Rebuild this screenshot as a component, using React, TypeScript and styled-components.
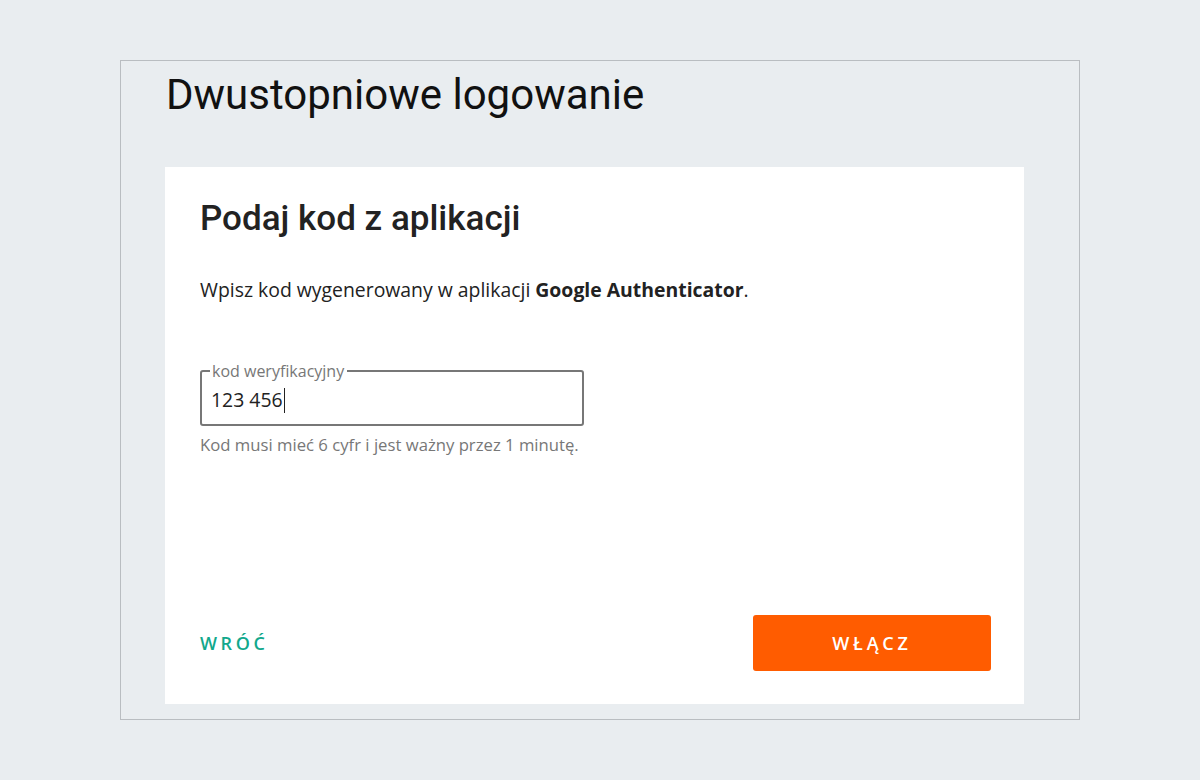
import styled, { createGlobalStyle } from "styled-components";

const GlobalStyle = createGlobalStyle`
  html, body {
    margin: 0;
    padding: 0;
    background: #e9edf0;
  }
  #root {
    padding-top: 60px;
  }
`;

const Frame = styled.div`
  box-sizing: border-box;
  width: 960px;
  height: 660px;
  margin: 0 auto;
  border: 1px solid #b9bdc1;
  background: #e9edf0;
  display: flex;
  flex-direction: column;
  padding: 0 55px 15px 44px;
`;

const PageTitle = styled.h1`
  margin: 0;
  padding: 8px 0 0 1px;
  height: 106px;
  box-sizing: border-box;
  font-family: Roboto, "Liberation Sans", sans-serif;
  font-weight: 400;
  font-size: 42px;
  line-height: 52px;
  color: #111;
`;

const Card = styled.div`
  flex: 1;
  background: #fff;
  display: flex;
  flex-direction: column;
  padding: 31px 33px 33px 35px;
`;

const CardTitle = styled.h2`
  margin: 0;
  font-family: Roboto, "Liberation Sans", sans-serif;
  font-weight: 500;
  font-size: 35px;
  line-height: 42px;
  color: #222;
`;

const Lead = styled.p`
  margin: 36px 0 0;
  font-family: "Open Sans", "Liberation Sans", sans-serif;
  font-size: 19.4px;
  line-height: 28px;
  color: #222;

  b {
    font-weight: 700;
  }
`;

const Field = styled.fieldset`
  box-sizing: border-box;
  width: 384px;
  height: 63px;
  margin: 59px 0 0;
  padding: 0 9px;
  border: 2px solid #777;
  border-radius: 3px;
`;

const Legend = styled.legend`
  padding: 0 3px 0 2px;
  margin-left: -1px;
  font-family: "Open Sans", "Liberation Sans", sans-serif;
  font-size: 16px;
  line-height: 16px;
  color: #777;
`;

const Value = styled.div`
  font-family: "Open Sans", "Liberation Sans", sans-serif;
  font-size: 19.4px;
  line-height: 42px;
  color: #222;
  display: flex;
  align-items: center;
`;

const Caret = styled.span`
  display: inline-block;
  width: 1.5px;
  height: 25px;
  background: #222;
  margin-left: 1px;
`;

const Hint = styled.p`
  margin: 8px 0 0;
  font-family: "Open Sans", "Liberation Sans", sans-serif;
  font-size: 16.7px;
  line-height: 22px;
  color: #777;
`;

const Footer = styled.div`
  margin-top: auto;
  display: flex;
  align-items: center;
  justify-content: space-between;
`;

const TextButton = styled.button`
  background: none;
  border: none;
  padding: 0;
  font-family: "Open Sans", "Liberation Sans", sans-serif;
  font-weight: 600;
  font-size: 18px;
  letter-spacing: 3.6px;
  color: #12a88c;
  cursor: pointer;
`;

const PrimaryButton = styled.button`
  width: 238px;
  height: 56px;
  border: none;
  border-radius: 3px;
  background: #ff5c00;
  color: #fff;
  font-family: "Open Sans", "Liberation Sans", sans-serif;
  font-weight: 600;
  font-size: 18px;
  letter-spacing: 3.8px;
  cursor: pointer;
`;

export default function App() {
  return (
    <>
      <GlobalStyle />
      <Frame>
        <PageTitle>Dwustopniowe logowanie</PageTitle>
        <Card>
          <CardTitle>Podaj kod z aplikacji</CardTitle>
          <Lead>
            Wpisz kod wygenerowany w aplikacji <b>Google Authenticator</b>.
          </Lead>
          <Field>
            <Legend>kod weryfikacyjny</Legend>
            <Value>
              123 456
              <Caret />
            </Value>
          </Field>
          <Hint>Kod musi mieć 6 cyfr i jest ważny przez 1 minutę.</Hint>
          <Footer>
            <TextButton>WRÓĆ</TextButton>
            <PrimaryButton>WŁĄCZ</PrimaryButton>
          </Footer>
        </Card>
      </Frame>
    </>
  );
}
